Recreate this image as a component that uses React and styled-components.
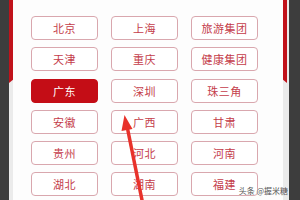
import styled, { createGlobalStyle } from 'styled-components'

const Global = createGlobalStyle`
  html, body {
    margin: 0;
    padding: 0;
    width: 300px;
    height: 200px;
    overflow: hidden;
    background: #3d3d3d;
  }
  #root { height: 200px; }
`

const Screen = styled.div`
  position: relative;
  display: flex;
  width: 300px;
  height: 200px;
  overflow: hidden;
  font-family: "Noto Sans CJK SC", "Noto Sans", sans-serif;
`

const Dark = styled.div`
  width: ${p => p.$w}px;
  background: #3d3d3d;
  flex-shrink: 0;
`

const Edge = styled.div`
  position: relative;
  width: ${p => p.$w}px;
  flex-shrink: 0;
  background: #ebebeb;
  &::before {
    content: '';
    position: absolute;
    left: 0;
    top: 0;
    width: ${p => p.$red}px;
    height: 83px;
    background: #c1121b;
    clip-path: ${p => p.$flip
      ? 'polygon(0 0, 100% 0, 100% 100%, 0 96%)'
      : 'polygon(0 0, 100% 0, 100% 96%, 0 100%)'};
  }
`

const Panel = styled.div`
  flex: 1;
  background: #fdfdfd;
  padding: 16px 25px 0 18px;
`

const Grid = styled.div`
  display: grid;
  grid-template-columns: repeat(3, 67px);
  grid-auto-rows: 24px;
  column-gap: 13px;
  row-gap: 7.25px;
`

const Chip = styled.div`
  display: flex;
  align-items: center;
  justify-content: center;
  box-sizing: border-box;
  border: 1.5px solid ${p => p.$active ? '#c40d16' : '#d9a7ae'};
  border-radius: 4px;
  background: ${p => p.$active ? '#c40d16' : '#fff'};
  color: ${p => p.$active ? '#fff' : '#c43c4a'};
  font-size: 11px;
  letter-spacing: 0.5px;
`

const Arrow = styled.svg`
  position: absolute;
  left: 0;
  top: 0;
  pointer-events: none;
`

const Mark = styled.div`
  position: absolute;
  right: 12px;
  bottom: 4px;
  font-size: 8px;
  color: #555;
  text-shadow: 0 0 1px #fff, 0 0 1px #fff;
  white-space: nowrap;
`

const cities = [
  '北京', '上海', '旅游集团',
  '天津', '重庆', '健康集团',
  '广东', '深圳', '珠三角',
  '安徽', '广西', '甘肃',
  '贵州', '河北', '河南',
  '湖北', '湖南', '福建',
]

export default function App() {
  return (
    <>
      <Global />
      <Screen>
        <Dark $w={9} />
        <Edge $w={4} $red={4} />
        <Panel>
          <Grid>
            {cities.map(c => (
              <Chip key={c} $active={c === '广东'}>{c}</Chip>
            ))}
          </Grid>
        </Panel>
        <Edge $w={6} $red={4} $flip />
        <Dark $w={11} />
        <Arrow width="300" height="200" viewBox="0 0 300 200">
          <line x1="143" y1="205" x2="127" y2="126" stroke="#e8322b" strokeWidth="3.5" />
          <polygon points="124.5,115 132.5,129 121.5,131" fill="#e8322b" />
        </Arrow>
        <Mark>头条 @握米糖</Mark>
      </Screen>
    </>
  )
}
